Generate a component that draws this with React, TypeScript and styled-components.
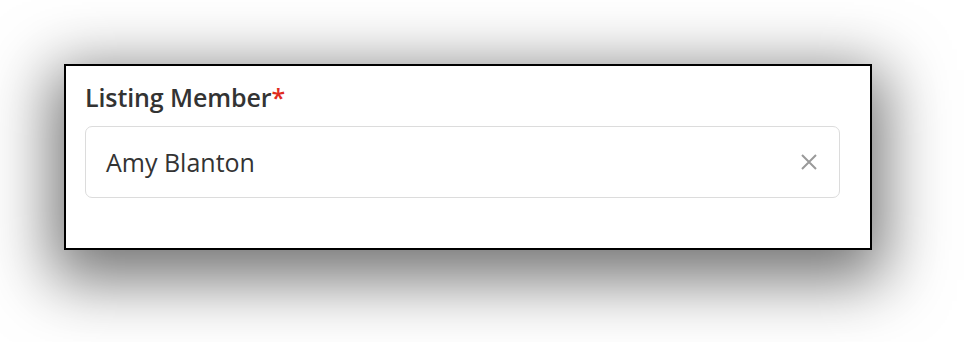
import React from "react";
import styled, { createGlobalStyle } from "styled-components";

const Global = createGlobalStyle`
  html, body { margin: 0; padding: 0; background: #ffffff; }
  body { font-family: "Open Sans", "Liberation Sans", sans-serif; }
`;

const Page = styled.div`
  width: 964px;
  height: 342px;
  padding: 64px 0 0 64px;
  box-sizing: border-box;
`;

const Card = styled.div`
  width: 808px;
  height: 186px;
  box-sizing: border-box;
  background: #ffffff;
  border: 2px solid #000000;
  box-shadow: 0 18px 60px 12px rgba(0, 0, 0, 0.55);
  padding: 14px 30px 0 19px;
  display: flex;
  flex-direction: column;
  gap: 12px;
`;

const Label = styled.label`
  font-size: 25px;
  font-weight: 600;
  color: #333333;
  line-height: 34px;
  letter-spacing: -0.1px;
`;

const Star = styled.span`
  color: #e02b20;
`;

const Field = styled.div`
  height: 72px;
  box-sizing: border-box;
  border: 1px solid #dcdcdc;
  border-radius: 7px;
  display: flex;
  align-items: center;
  justify-content: space-between;
  padding: 0 21px 0 20px;
`;

const Value = styled.span`
  font-size: 25px;
  line-height: 34px;
  color: #333333;
`;

const Clear = styled.button`
  border: none;
  background: none;
  padding: 0;
  display: flex;
  cursor: pointer;
`;

export default function App() {
  return (
    <>
      <Global />
      <Page>
        <Card>
          <Label>
            Listing Member<Star>*</Star>
          </Label>
          <Field>
            <Value>Amy Blanton</Value>
            <Clear aria-label="Clear">
              <svg width="18" height="18" viewBox="0 0 18 18">
                <path d="M2 2 L16 16 M16 2 L2 16" stroke="#9a9a9a" strokeWidth="2" />
              </svg>
            </Clear>
          </Field>
        </Card>
      </Page>
    </>
  );
}
